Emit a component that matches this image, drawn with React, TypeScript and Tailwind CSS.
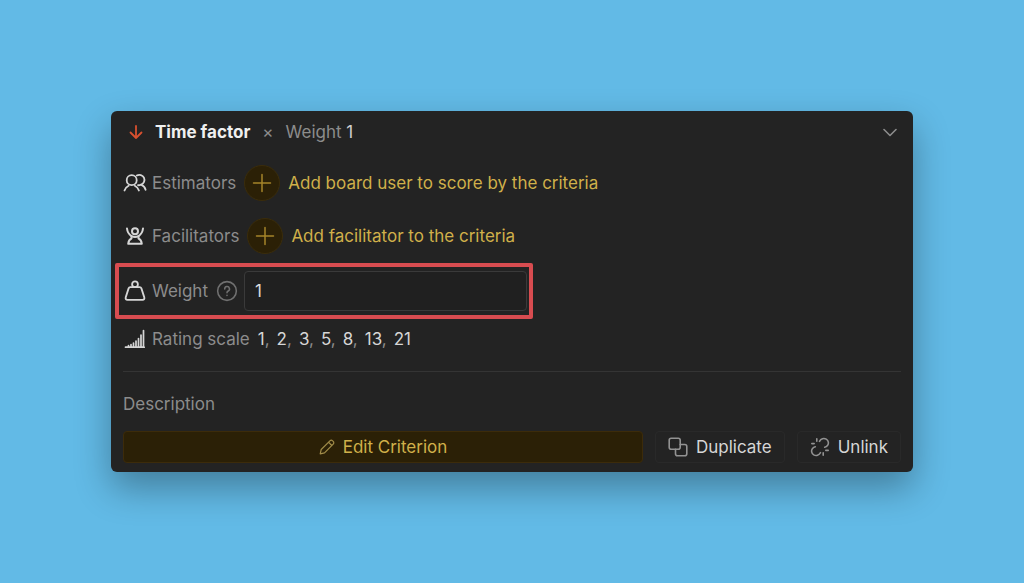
import { useState } from "react";
import type { ReactNode } from "react";

const scale = [1, 2, 3, 5, 8, 13, 21];

function Icon({ className, box = 24, width = 2, children }: { className: string; box?: number; width?: number; children: ReactNode }) {
  return (
    <svg
      viewBox={`0 0 ${box} ${box}`}
      className={`shrink-0 ${className}`}
      fill="none"
      stroke="currentColor"
      strokeWidth={width}
      strokeLinecap="round"
      strokeLinejoin="round"
      aria-hidden="true"
    >
      {children}
    </svg>
  );
}

function AddButton({ label }: { label: string }) {
  return (
    <button type="button" className="ml-2 flex items-center gap-2 text-[#d0b04a]">
      <span className="flex size-9 items-center justify-center rounded-full border border-[#3a2c0b] bg-[#2b2006] text-[#a5842a]">
        <Icon className="size-5" box={20} width={1.5}>
          <path d="M10 1.5v17M1.5 10h17" />
        </Icon>
      </span>
      {label}
    </button>
  );
}

export default function App() {
  const [open, setOpen] = useState(true);
  const [weight, setWeight] = useState("1");

  return (
    <main className="flex min-h-screen items-center justify-center bg-[#62bae6] px-4 font-['Inter',sans-serif] text-[17px] leading-6 text-[#8c8c8c]">
      <section className="w-full max-w-[802px] rounded-md bg-[#232323] px-3 pb-[9px] shadow-[0_16px_36px_rgba(0,0,0,0.32)]">
        <header className="flex h-[42px] items-center pr-1 pl-1">
          <Icon className="mr-2.5 size-[18px] text-[#d8502f]" box={18} width={1.8}>
            <path d="M9 3v12M3.500 9.500L9 15l5.500-5.500" />
          </Icon>
          <h2 className="font-bold text-[#f0f0f0]">Time factor</h2>
          <span className="mx-3 text-[17px]">×</span>
          <span>
            Weight <span className="text-[#d0d0d0]">1</span>
          </span>
          <button type="button" aria-label="Toggle criterion" onClick={() => setOpen(!open)} className="ml-auto">
            <Icon className="size-[14px]" box={14} width={1.6}>
              <path d="M1 4.5l6 6 6-6" />
            </Icon>
          </button>
        </header>

        {open && (
          <div>
            <div className="flex h-[60px] items-center">
              <Icon className="mr-[5px] size-6 text-[#d6d6d6]" width={1.8}>
                <circle cx="8.700" cy="9.200" r="5" />
                <path d="M1.500 19.500c.6-2 1.900-3.600 4.100-4.700M11.800 14.800c2.200 1.100 3.500 2.700 4.100 4.700" />
                <path d="M13.800 4.600a5 5 0 1 1 4.200 9c2.300.9 4 2.800 4.600 5.200M15 14.200c1 .1 2-.1 3-.6" />
              </Icon>
              <span>Estimators</span>
              <AddButton label="Add board user to score by the criteria" />
            </div>

            <div className="flex h-[46px] items-center">
              <Icon className="mr-[5px] size-6 text-[#d6d6d6]" width={2}>
                <circle cx="12" cy="7.200" r="3" />
                <path d="M4 4.500c.4 3.700 2.200 6.200 4.500 7.600 2.200 1 4.800 1 7 0 2.300-1.400 4.100-3.900 4.500-7.600" />
                <path d="M8.500 12.100v2.400c-1.800.7-3 2.600-3.300 5.300h13.600c-.3-2.700-1.500-4.600-3.300-5.300v-2.400" />
              </Icon>
              <span>Facilitators</span>
              <AddButton label="Add facilitator to the criteria" />
            </div>

            <div className="-ml-2 mt-1 flex h-14 w-full max-w-[418px] items-center rounded-xs border-4 border-[#d84c50] pr-0.5 pl-1">
              <Icon className="mr-[5px] size-6 text-[#d6d6d6]" width={1.8}>
                <circle cx="12" cy="5.200" r="2.900" />
                <path d="M7.300 8.200h9.400c.9 0 1.400.4 1.700 1.200l2.900 9c.4 1.400-.3 2.400-1.700 2.400H4.400c-1.400 0-2.100-1-1.700-2.400l2.900-9c.3-.8.8-1.200 1.700-1.200z" />
              </Icon>
              <label htmlFor="weight">Weight</label>
              <button type="button" aria-label="About weight" className="mr-1.5 ml-2">
                <Icon className="size-[22px] text-[#707070]" width={1.7}>
                  <circle cx="12" cy="12" r="10.200" />
                  <path d="M9.500 9.700a2.600 2.600 0 1 1 3.800 2.300c-.9.5-1.300.9-1.300 1.900M12 16.600v.2" />
                </Icon>
              </button>
              <input
                id="weight"
                value={weight}
                onChange={(e) => setWeight(e.target.value)}
                className="h-10 min-w-0 flex-1 rounded-sm border border-[#3a3a3a] bg-[#202020] px-2.5 text-[#dcdcdc] outline-none"
              />
            </div>

            <div className="flex h-10 items-center">
              <Icon className="mr-[5px] size-6 text-[#d6d6d6]" width={1.7}>
                <path d="M2.500 20.200h18.700M20.500 19.500v-16M18 19.500v-11.500M15.500 19.500v-8M13 19.500v-5.500M10.500 19.500v-3.500M8 19.500v-2M5.500 19.500v-1" />
              </Icon>
              <span className="mr-2">Rating scale</span>
              <span className="flex gap-[7px]">
                {scale.map((n, i) => (
                  <span key={n}>
                    <span className="text-[#d6d6d6]">{n}</span>
                    {i < scale.length - 1 && ","}
                  </span>
                ))}
              </span>
            </div>

            <hr className="mt-3 border-[#343434]" />
            <p className="mt-5 mb-[15px]">Description</p>

            <div className="flex gap-3">
              <button type="button" className="flex h-8 flex-1 items-center justify-center gap-2 rounded-sm border border-[#3c2b0a] bg-[#2b2006] text-[#d0b04a]">
                <Icon className="size-4 text-[#a18c49]" box={16} width={1.2}>
                  <path d="M1.200 14.800l1-4.300L10.900 1.800c.8-.8 1.900-.8 2.700 0l.6.6c.8.8.8 1.900 0 2.700L5.500 13.800zM9.500 3.200l3.300 3.300" />
                </Icon>
                Edit Criterion
              </button>
              <button type="button" className="flex h-8 items-center gap-2 rounded-sm border border-[#292929] px-3 text-[#d6d6d6]">
                <Icon className="size-5 text-[#929292]" box={20} width={1.6}>
                  <rect x="1.200" y="1.200" width="11" height="11" rx="2" />
                  <path d="M12.200 7.500h4.600a2 2 0 0 1 2 2v7.300a2 2 0 0 1-2 2H9.500a2 2 0 0 1-2-2V12.200" />
                </Icon>
                Duplicate
              </button>
              <button type="button" className="flex h-8 items-center gap-2 rounded-sm border border-[#292929] px-3 text-[#d6d6d6]">
                <Icon className="size-5 text-[#929292]" box={20} width={1.6}>
                  <path d="M9.500 4.300c1.400-2.600 4.300-3.600 6.700-2.200 2.400 1.500 2.900 4.300 1.300 6.500-.7.900-1.600 1.500-2.800 1.700" />
                  <path d="M10.500 15.700c-1.400 2.600-4.300 3.600-6.700 2.200-2.400-1.500-2.900-4.300-1.300-6.500.7-.9 1.600-1.500 2.800-1.700" />
                  <path d="M6.800 1.800v2.400M1.800 6.600h2.400M13.200 15.800v2.400M15.800 13.400h2.400" />
                </Icon>
                Unlink
              </button>
            </div>
          </div>
        )}
      </section>
    </main>
  );
}
